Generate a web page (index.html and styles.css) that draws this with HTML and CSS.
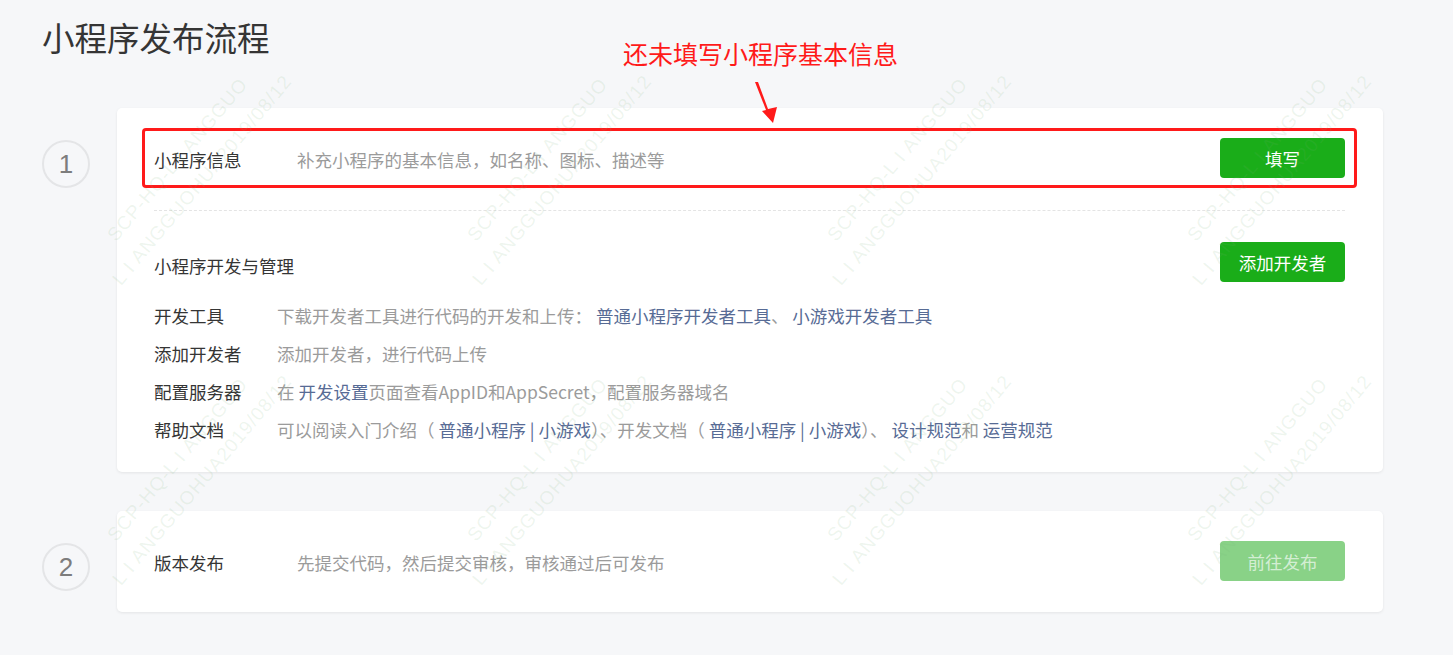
FILE: index.html
```html
<!DOCTYPE html>
<html lang="zh-CN">
<head>
    <meta charset="UTF-8">
    <meta name="viewport" content="width=device-width, initial-scale=1.0">
    <title>小程序发布流程</title>
    <link rel="stylesheet" href="styles.css">
</head>
<body>
    <div class="page">
        <h1 class="page-title">小程序发布流程</h1>

        <div class="step">
            <div class="step-num">1</div>
            <div class="card card-manage">
                <div class="row highlight">
                    <span class="row-label">小程序信息</span>
                    <span class="row-desc">补充小程序的基本信息，如名称、图标、描述等</span>
                    <a href="#" class="btn">填写</a>
                </div>

                <div class="divider"></div>

                <div class="manage-head">
                    <span class="manage-title">小程序开发与管理</span>
                    <a href="#" class="btn">添加开发者</a>
                </div>

                <ul class="manage-list">
                    <li>
                        <span class="item-label">开发工具</span>
                        <span class="item-desc">下载开发者工具进行代码的开发和上传： <a href="#">普通小程序开发者工具</a>、 <a href="#">小游戏开发者工具</a></span>
                    </li>
                    <li>
                        <span class="item-label">添加开发者</span>
                        <span class="item-desc">添加开发者，进行代码上传</span>
                    </li>
                    <li>
                        <span class="item-label">配置服务器</span>
                        <span class="item-desc">在 <a href="#">开发设置</a>页面查看AppID和AppSecret，配置服务器域名</span>
                    </li>
                    <li>
                        <span class="item-label">帮助文档</span>
                        <span class="item-desc">可以阅读入门介绍（ <a href="#">普通小程序 | 小游戏</a>）、开发文档（ <a href="#">普通小程序 | 小游戏</a>）、 <a href="#">设计规范</a>和 <a href="#">运营规范</a></span>
                    </li>
                </ul>
            </div>
        </div>

        <div class="step">
            <div class="step-num">2</div>
            <div class="card">
                <div class="row">
                    <span class="row-label">版本发布</span>
                    <span class="row-desc">先提交代码，然后提交审核，审核通过后可发布</span>
                    <a href="#" class="btn btn-disabled">前往发布</a>
                </div>
            </div>
        </div>

        <!-- annotation drawn over the screenshot -->
        <div class="note">还未填写小程序基本信息</div>
        <svg class="note-arrow" width="30" height="48" viewBox="0 0 30 48">
            <polygon points="4,3 7,3 17,30 26,28 22,44 11,32 15,31" fill="#ff1a1a"/>
        </svg>
    </div>

    <div class="watermark">
        <div class="wm-grid">
            <div class="wm"><span>SCP-HQ-L I ANGGUO</span><span>L I ANGGUOHUA2019/08/12</span></div>
            <div class="wm"><span>SCP-HQ-L I ANGGUO</span><span>L I ANGGUOHUA2019/08/12</span></div>
            <div class="wm"><span>SCP-HQ-L I ANGGUO</span><span>L I ANGGUOHUA2019/08/12</span></div>
            <div class="wm"><span>SCP-HQ-L I ANGGUO</span><span>L I ANGGUOHUA2019/08/12</span></div>
            <div class="wm"><span>SCP-HQ-L I ANGGUO</span><span>L I ANGGUOHUA2019/08/12</span></div>
            <div class="wm"><span>SCP-HQ-L I ANGGUO</span><span>L I ANGGUOHUA2019/08/12</span></div>
            <div class="wm"><span>SCP-HQ-L I ANGGUO</span><span>L I ANGGUOHUA2019/08/12</span></div>
            <div class="wm"><span>SCP-HQ-L I ANGGUO</span><span>L I ANGGUOHUA2019/08/12</span></div>
        </div>
    </div>
</body>
</html>
```

FILE: styles.css
```css
body {
    margin: 0;
    font-family: "Noto Sans CJK SC", "Noto Sans", sans-serif;
    background-color: #f6f7f9;
    color: #353535;
    font-size: 17.5px;
    position: relative;
    overflow: hidden;
    height: 655px;
}

.page {
    position: relative;
    padding: 14px 70px 0 42px;
}

.page-title {
    margin: 0 0 49px;
    font-size: 32.5px;
    font-weight: normal;
    line-height: 45px;
    color: #353535;
}

.step {
    display: flex;
    align-items: flex-start;
    gap: 27px;
    margin-bottom: 39px;
}

.step-num {
    flex: none;
    box-sizing: border-box;
    width: 48px;
    height: 48px;
    margin-top: 32px;
    border: 2px solid #e4e5e7;
    border-radius: 50%;
    display: flex;
    align-items: center;
    justify-content: center;
    font-family: "Liberation Sans", Arial, sans-serif;
    font-size: 26px;
    color: #7d7d7d;
}

.card {
    flex: 1;
    background-color: #fff;
    border-radius: 5px;
    box-shadow: 0 1px 3px rgba(0, 0, 0, 0.08);
    padding: 30px 38px 31px 37px;
}

.card-manage {
    padding-bottom: 23px;
}

.row {
    display: flex;
    align-items: center;
    height: 40px;
}

.highlight {
    position: relative;
}

.highlight::before {
    content: "";
    position: absolute;
    top: -10px;
    bottom: -10px;
    left: -12px;
    right: -12px;
    border: 3px solid #ff1a1a;
    border-radius: 4px;
}

.row-label {
    width: 143px;
    flex: none;
    line-height: 24px;
    margin-top: 4px;
}

.row-desc {
    flex: 1;
    color: #9b9b9b;
    line-height: 24px;
    margin-top: 4px;
}

.btn {
    flex: none;
    width: 125px;
    height: 40px;
    display: flex;
    align-items: center;
    justify-content: center;
    background-color: #1aad19;
    color: #fff;
    text-decoration: none;
    border-radius: 4px;
}

.btn-disabled {
    background-color: #89d287;
    color: rgba(255, 255, 255, 0.65);
}

.divider {
    border-top: 1px dashed #e4e4e4;
    margin: 32px 0 31px;
}

.manage-head {
    display: flex;
    align-items: flex-end;
    justify-content: space-between;
}

.manage-title {
    line-height: 24px;
    margin-bottom: 4px;
}

.manage-list {
    list-style: none;
    margin: 15px 0 0;
    padding: 0;
}

.manage-list li {
    display: flex;
    line-height: 38px;
}

.item-label {
    width: 123px;
    flex: none;
}

.item-desc {
    color: #9b9b9b;
}

.item-desc a {
    color: #576b95;
    text-decoration: none;
}

.note {
    position: absolute;
    left: 623px;
    top: 38px;
    font-size: 25px;
    line-height: 30px;
    color: #ff1a1a;
}

.note-arrow {
    position: absolute;
    left: 751px;
    top: 79px;
}

/* faint diagonal watermark laid over the whole page */
.watermark {
    position: absolute;
    top: 0;
    left: 0;
    right: 0;
    bottom: 0;
    overflow: hidden;
    pointer-events: none;
}

.wm-grid {
    display: grid;
    grid-template-columns: repeat(4, 360px);
    grid-auto-rows: 300px;
    padding: 20px 0 0 10px;
}

.wm {
    display: flex;
    flex-direction: column;
    align-items: center;
    justify-content: center;
    transform: rotate(-50deg);
    font-family: "Liberation Sans", Arial, sans-serif;
    font-size: 19px;
    letter-spacing: 1px;
    line-height: 32px;
    color: rgba(120, 180, 120, 0.13);
    white-space: nowrap;
}
```
